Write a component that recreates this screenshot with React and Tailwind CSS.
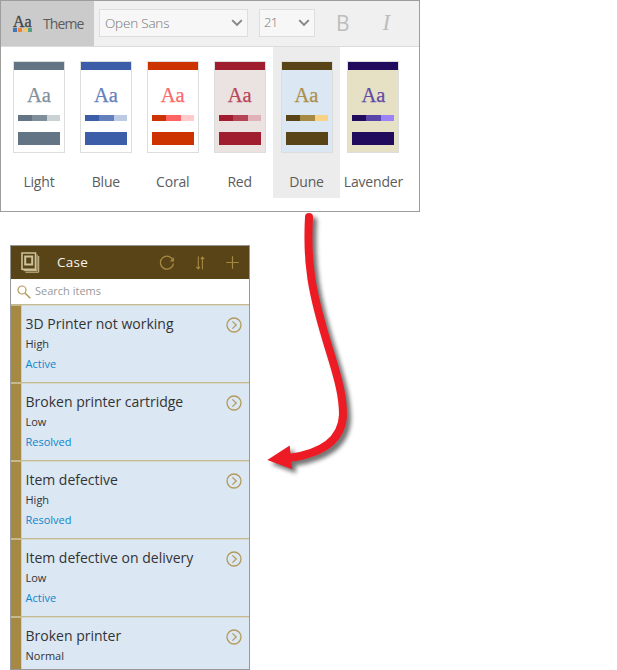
const themes = [
  { name: 'Light', paper: 'bg-white', main: 'bg-[#637584]', text: 'text-[#82909d]', mid: 'bg-[#7f8f99]', soft: 'bg-[#cbd2d6]' },
  { name: 'Blue', paper: 'bg-white', main: 'bg-[#3c5ea9]', text: 'text-[#6480bd]', mid: 'bg-[#637fbd]', soft: 'bg-[#bccae4]' },
  { name: 'Coral', paper: 'bg-white', main: 'bg-[#cc3300]', text: 'text-[#fb6a6a]', mid: 'bg-[#ff6464]', soft: 'bg-[#ffcaca]' },
  { name: 'Red', paper: 'bg-[#ebe3e2]', main: 'bg-[#a01c2f]', text: 'text-[#b94656]', mid: 'bg-[#b54555]', soft: 'bg-[#e0b1b8]' },
  { name: 'Dune', paper: 'bg-[#dbe7f3]', main: 'bg-[#594417]', text: 'text-[#ab8f4d]', mid: 'bg-[#a68943]', soft: 'bg-[#f8d285]', selected: true },
  { name: 'Lavender', paper: 'bg-[#e6e1c4]', main: 'bg-[#200b5c]', text: 'text-[#614ba7]', mid: 'bg-[#5845a9]', soft: 'bg-[#9b83f7]' },
];

const cases = [
  ['3D Printer not working', 'High', 'Active'],
  ['Broken printer cartridge', 'Low', 'Resolved'],
  ['Item defective', 'High', 'Resolved'],
  ['Item defective on delivery', 'Low', 'Active'],
  ['Broken printer', 'Normal', ''],
];

function Chevron() {
  return (
    <svg width="12" height="8" viewBox="0 0 12 8" fill="none" stroke="#858585" strokeWidth="1.9">
      <path d="M1.2 1.2 6 6l4.8-4.8" />
    </svg>
  );
}

function ThemeCard({ theme }) {
  return (
    <div className={`flex h-[151px] w-[66.9px] shrink-0 flex-col items-center pt-[14px] ${theme.selected ? 'bg-[#ececec]' : ''}`}>
      <div className={`flex h-[92px] w-[52px] shrink-0 flex-col border border-[#dcdddd] ${theme.paper}`}>
        <div className={`h-[8px] ${theme.main}`} />
        <div className={`mt-[12px] h-[26px] text-center font-['Liberation_Serif',serif] text-[20.5px] leading-[26px] [-webkit-text-stroke:0.25px_currentColor] ${theme.text}`}>Aa</div>
        <div className="mx-[4px] mt-[7px] flex h-[6px]">
          <div className={`w-[14px] ${theme.main}`} />
          <div className={`w-[15px] ${theme.mid}`} />
          <div className={`flex-1 ${theme.soft}`} />
        </div>
        <div className={`mx-[4px] mt-[11px] h-[13px] ${theme.main}`} />
      </div>
      <div className="mt-[19px] text-[14px] leading-5 tracking-[-0.2px] whitespace-nowrap text-[#5c5c5c]">{theme.name}</div>
    </div>
  );
}

function ThemePanel() {
  return (
    <div className="h-[212px] w-[420px] border border-[#9d9d9d] bg-white">
      <div className="flex h-[46px] items-start border-b border-[#dcdcdc] bg-[#f0f0f0]">
        <div className="flex h-[45px] w-[93px] shrink-0 bg-[#cbcbcb] pl-[12px]">
          <div className="w-[19px] pt-[12px]">
            <div className="h-[15px] font-['Liberation_Serif',serif] text-[16px] leading-[18px] text-[#444] [-webkit-text-stroke:0.3px_#444]">Aa</div>
            <div className="flex gap-[1px]">
              <i className="size-[4px] bg-[#3e78bb]" />
              <i className="size-[4px] bg-[#ef8433]" />
              <i className="size-[4px] bg-[#f5c570]" />
              <i className="size-[4px] bg-[#55a186]" />
            </div>
          </div>
          <div className="ml-[11px] pt-[13px] text-[14px] leading-5 tracking-[-0.9px] text-[#5c5c5c]">Theme</div>
        </div>
        <div className="mt-[8px] ml-[5px] flex h-[28px] w-[149px] shrink-0 items-center justify-between border border-[#dedede] bg-[#f7f7f7] pr-[4px] pl-[5px] text-[13.5px] tracking-[-0.2px] font-light text-[#757575]">
          <span>Open Sans</span>
          <Chevron />
        </div>
        <div className="mt-[8px] ml-[11px] flex h-[28px] w-[56px] shrink-0 items-center justify-between border border-[#dedede] bg-[#f7f7f7] pr-[4px] pl-[4px] text-[13px] tracking-[-0.6px] font-light text-[#757575]">
          <span>21</span>
          <Chevron />
        </div>
        <div className="mt-[8px] ml-[21px] text-[21px] leading-7 text-[#bdbdbd]">B</div>
        <div className="mt-[8px] ml-[33px] font-['Liberation_Serif',serif] text-[23px] leading-7 text-[#bdbdbd] italic">I</div>
      </div>
      <div className="flex pl-[4.5px]">
        {themes.map((t) => <ThemeCard key={t.name} theme={t} />)}
      </div>
    </div>
  );
}

function CaseRow({ item: [title, priority, status] }) {
  return (
    <div className="flex h-[78px] shrink-0 border-t border-[#c4b98f] bg-[#dbe7f3]">
      <div className="w-[11px] shrink-0 border-t border-r border-t-[#c8b98c] border-r-[#d3cfb9] bg-[#a68943]" />
      <div className="flex flex-1 border-t border-[#d7d9cf]">
        <div className="flex-1 pl-[3.5px] text-[11px] whitespace-nowrap text-[#333]">
          <div className="mt-[8px] text-[14px] leading-5">{title}</div>
          <div className="mt-[2px] leading-4">{priority}</div>
          <div className="mt-[4px] leading-4 text-[#0c86cc]">{status}</div>
        </div>
        <svg className="mt-[11px] mr-[7px] shrink-0" width="16" height="16" viewBox="0 0 16 16" fill="none" stroke="#b39a5c" strokeWidth="1.3">
          <circle cx="8" cy="8" r="7" />
          <path d="m6.4 4.4 3.8 3.6-3.8 3.6" />
        </svg>
      </div>
    </div>
  );
}

function CasePanel() {
  return (
    <div className="mt-[33px] ml-[10px] flex h-[425px] w-[240px] flex-col overflow-hidden border border-[#989898] bg-white">
      <div className="flex h-[33px] shrink-0 items-center bg-[#594417] pl-[10px]">
        <svg width="19" height="21" viewBox="0 0 19 21" fill="none" stroke="#cdc29c">
          <path d="M1 1h13.5v16.2H1z" strokeWidth="1.6" />
          <path d="M4.2 4.5h7v8h-7z" strokeWidth="2" />
          <path d="M2.5 18.6h13.6V2.5M4.5 20.2h13.2V4" strokeWidth="1" />
        </svg>
        <div className="ml-[17px] flex-1 text-[13.5px] tracking-[0.3px] text-[#f6f4ef]">Case</div>
        <svg width="16" height="16" viewBox="0 0 16 16" fill="none" stroke="#a68943" strokeWidth="1.25">
          <path d="M14 5.2A6.5 6.5 0 1 0 14.4 8.5" />
          <path d="M15 2.2v4.3h-4.2z" fill="#a68943" stroke="none" />
        </svg>
        <svg className="ml-[21px]" width="9" height="14" viewBox="0 0 9 14" fill="none" stroke="#a68943" strokeWidth="1.1">
          <path d="M2.3.5v12.3M.4 10.8l1.9 2 1.6-2M6.4 13.3V1.2M4.8 3.2l1.6-2 1.9 2" />
        </svg>
        <svg className="mr-[10px] ml-[21px]" width="13" height="13" viewBox="0 0 13 13" fill="none" stroke="#a68943" strokeWidth="1.2">
          <path d="M6.5.3v12.4M.3 6.5h12.4" />
        </svg>
      </div>
      <div className="flex h-[25px] shrink-0 items-center pl-[6px]">
        <svg width="14" height="14" viewBox="0 0 14 14" fill="none" stroke="#b39a5c" strokeWidth="1.2">
          <circle cx="5" cy="5" r="4" />
          <path d="m8 8 5.3 5.3" strokeWidth="1.6" />
        </svg>
        <span className="ml-[4px] text-[11px] text-[#999]">Search items</span>
      </div>
      {cases.map((item) => <CaseRow key={item[0]} item={item} />)}
    </div>
  );
}

export default function App() {
  return (
    <div className="relative h-[670px] w-[617px] overflow-hidden bg-white font-['Open_Sans','Noto_Sans',sans-serif]">
      <ThemePanel />
      <CasePanel />
      <svg className="absolute top-[205px] left-[255px] drop-shadow-[4px_4px_2px_rgba(0,0,0,0.55)]" width="110" height="280" viewBox="0 0 110 280" fill="none">
        <path d="M54 12C51.5 58 56 86 75 147C84 176 88 192 88 210C87 233 71 248 34 253" stroke="#ed1c24" strokeWidth="8" />
        <circle cx="54" cy="12" r="4" fill="#ed1c24" />
        <path d="M12.3 255 34.7 240.5 37.3 264.3z" fill="#ed1c24" />
      </svg>
    </div>
  );
}
